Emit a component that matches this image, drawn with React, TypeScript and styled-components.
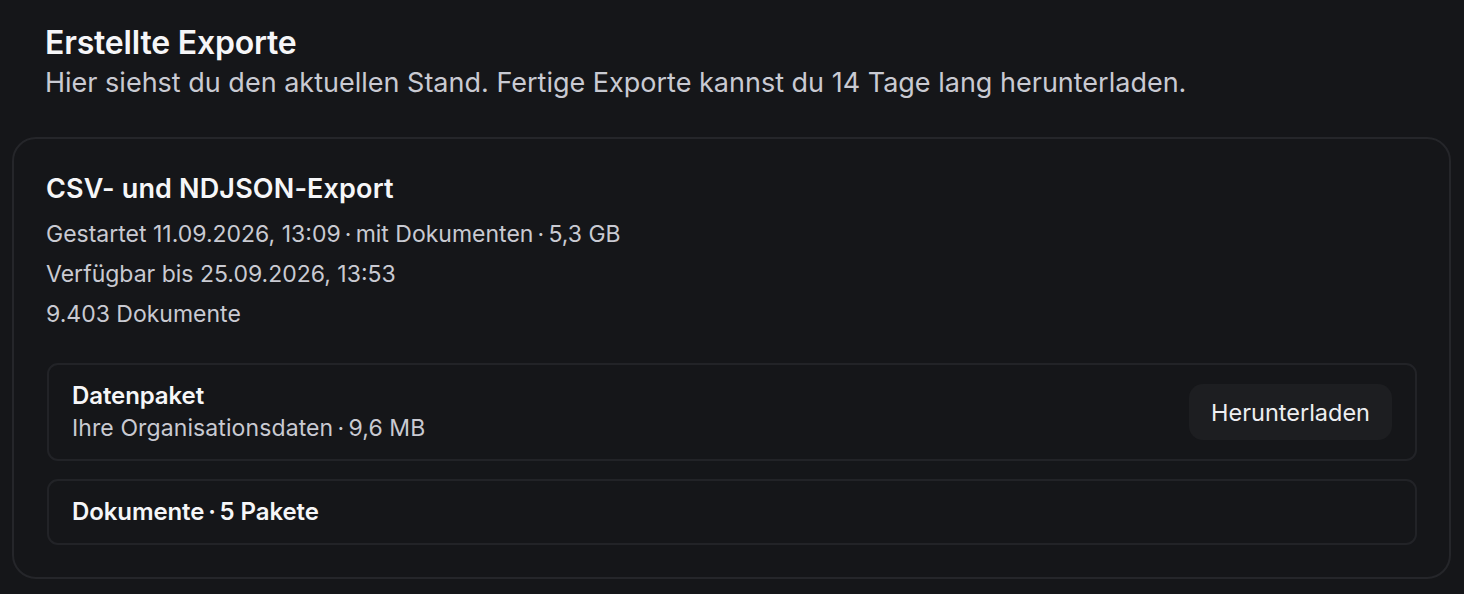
import styled, {createGlobalStyle} from "styled-components";

const GlobalStyle = createGlobalStyle`
  html, body {
    margin: 0;
    padding: 0;
    background-color: #151619;
  }
  body {
    font-family: Inter, "Noto Sans", sans-serif;
    color: #f4f4f6;
    -webkit-font-smoothing: antialiased;
  }
`

type Pkg = {
    title: string
    subtitle?: string
    action?: string
}

// thin spaces around the middle dot, as in the original
const dot = "\u2009·\u2009"

const packages: Pkg[] = [
    {title: "Datenpaket", subtitle: `Ihre Organisationsdaten${dot}9,6 MB`, action: "Herunterladen"},
    {title: `Dokumente${dot}5 Pakete`},
]

function PackageRow({pkg}: {pkg: Pkg}) {
    return (
        <PackageBox tall={!!pkg.subtitle}>
            <PackageText>
                <PackageTitle>{pkg.title}</PackageTitle>
                {pkg.subtitle && <PackageSub>{pkg.subtitle}</PackageSub>}
            </PackageText>
            {pkg.action && <DownloadButton>{pkg.action}</DownloadButton>}
        </PackageBox>
    )
}

export default function App() {
    return (
        <Page>
            <GlobalStyle/>
            <Header>
                <Title>Erstellte Exporte</Title>
                <Subtitle>Hier siehst du den aktuellen Stand. Fertige Exporte kannst du 14 Tage lang herunterladen.</Subtitle>
            </Header>
            <Card>
                <CardTitle>CSV- und NDJSON-Export</CardTitle>
                <MetaList>
                    <MetaLine>Gestartet 11.09.2026, 13:09{dot}mit Dokumenten{dot}5,3 GB</MetaLine>
                    <MetaLine>Verfügbar bis 25.09.2026, 13:53</MetaLine>
                    <MetaLine>9.403 Dokumente</MetaLine>
                </MetaList>
                <PackageList>
                    {packages.map(p => <PackageRow key={p.title} pkg={p}/>)}
                </PackageList>
            </Card>
        </Page>
    )
}

const Page = styled.div`
  display: flex;
  flex-direction: column;
  padding: 24px 13px 14px 12px;
  min-height: 594px;
  box-sizing: border-box;
`
const Header = styled.div`
  display: flex;
  flex-direction: column;
  padding: 0 33px;
  margin-bottom: 37px;
`
const Title = styled.h1`
  margin: 0;
  font-size: 32px;
  font-weight: 600;
  line-height: 38px;
  letter-spacing: -0.2px;
  color: #f6f6f8;
`
const Subtitle = styled.p`
  margin: 4px 0 0 0;
  font-size: 27px;
  font-weight: 400;
  line-height: 34px;
  letter-spacing: 0;
  color: #c9cad2;
`
const Card = styled.div`
  display: flex;
  flex-direction: column;
  border: 2px solid #25262a;
  border-radius: 24px;
  padding: 33px 32px 32px 32px;
`
const CardTitle = styled.h2`
  margin: 0;
  font-size: 27px;
  font-weight: 600;
  line-height: 34px;
  letter-spacing: 0.15px;
  color: #f6f6f8;
`
const MetaList = styled.div`
  display: flex;
  flex-direction: column;
  margin-top: 8px;
`
const MetaLine = styled.div`
  font-size: 23px;
  line-height: 40px;
  letter-spacing: 0;
  color: #c9cad2;
`
const PackageList = styled.div`
  display: flex;
  flex-direction: column;
  gap: 18px;
  margin-top: 29px;
  padding-left: 1px;
`
const PackageBox = styled.div<{tall: boolean}>`
  display: flex;
  align-items: center;
  justify-content: space-between;
  border: 2px solid #222327;
  border-radius: 11px;
  padding: 0 23px;
  height: ${p => p.tall ? 98 : 66}px;
  box-sizing: border-box;
`
const PackageText = styled.div`
  display: flex;
  flex-direction: column;
`
const PackageTitle = styled.span`
  font-size: 24px;
  font-weight: 600;
  line-height: 32px;
  letter-spacing: -0.1px;
  color: #f6f6f8;
`
const PackageSub = styled.span`
  font-size: 23px;
  line-height: 32px;
  letter-spacing: 0.1px;
  color: #c9cad2;
`
const DownloadButton = styled.button`
  border: none;
  background-color: #1d1e21;
  border-radius: 14px;
  height: 56px;
  padding: 0 22px;
  font-family: inherit;
  font-size: 23.5px;
  letter-spacing: 0;
  color: #eeeef1;
  cursor: pointer;
`
